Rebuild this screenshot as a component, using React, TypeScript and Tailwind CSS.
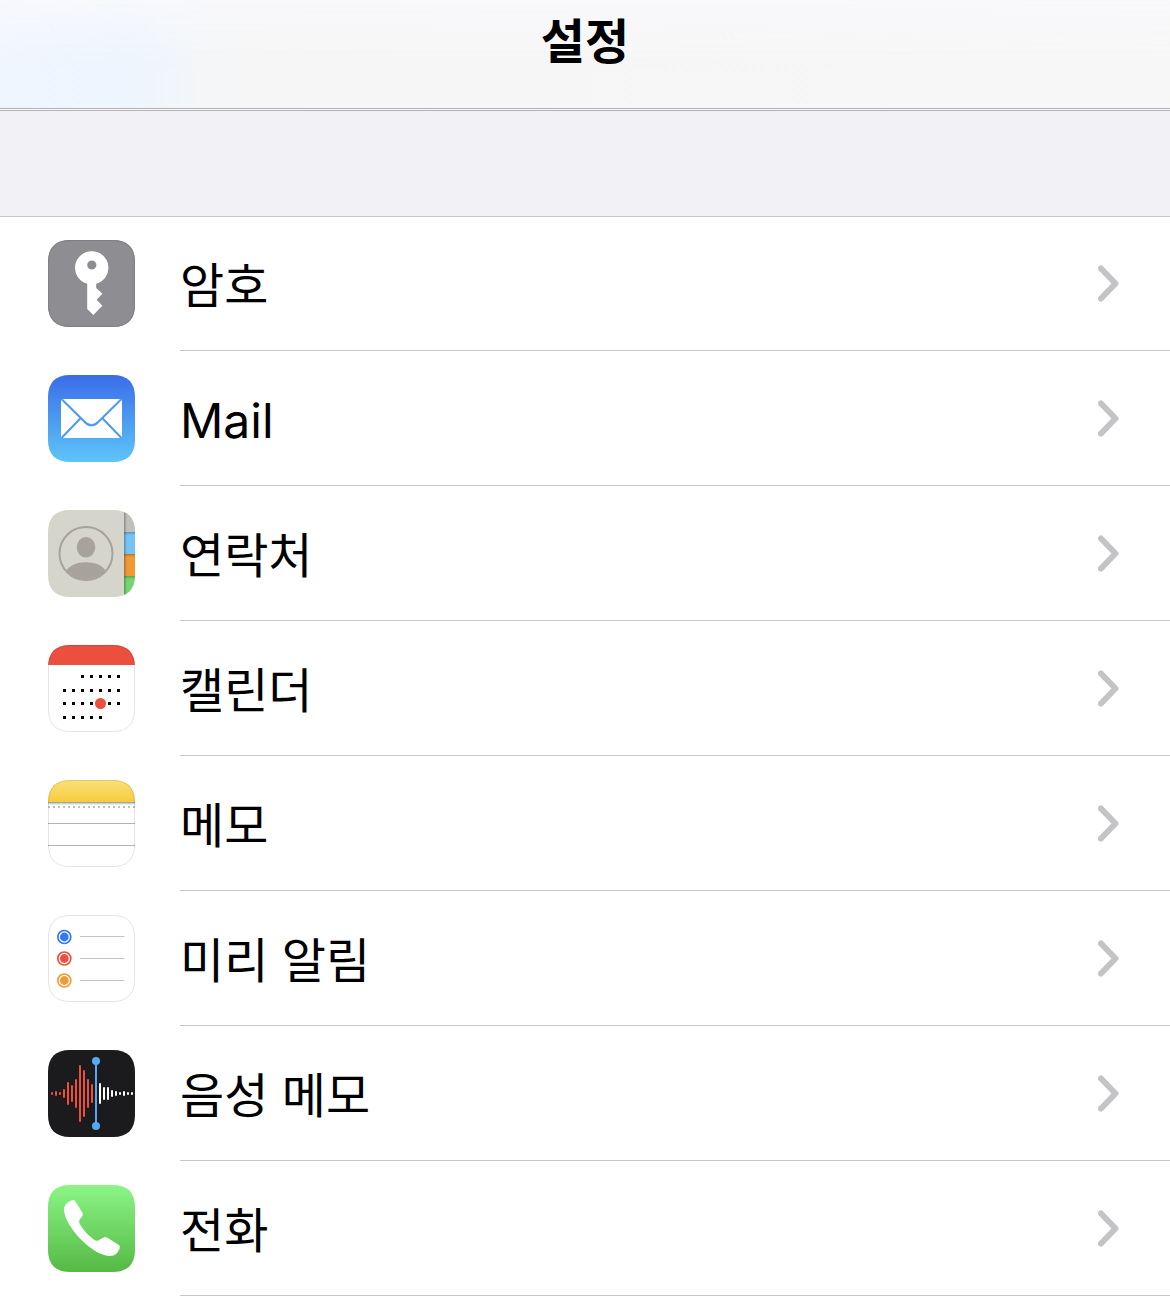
import React from "react";

const FRAME = "M22 .5H65C79 .5 86.500 8 86.500 22V65C86.500 79 79 86.500 65 86.500H22C8 86.500 .5 79 .5 65V22C.5 8 8 .5 22 .5Z";
const SHAPE = "M22 0H65C79.500 0 87 7.500 87 22V65C87 79.500 79.500 87 65 87H22C7.500 87 0 79.500 0 65V22C0 7.500 7.500 0 22 0Z";

function Tile({ id, outline, children }: { id: string; outline?: string; children: React.ReactNode }) {
  return (
    <svg viewBox="0 0 87 87" className="size-[87px] shrink-0" aria-hidden="true">
      <defs>
        <clipPath id={id + "-clip"}>
          <path d={SHAPE} />
        </clipPath>
      </defs>
      <g clipPath={"url(#" + id + "-clip)"}>{children}</g>
      {outline && <path d={FRAME} fill="none" stroke={outline} />}
    </svg>
  );
}

function KeyIcon() {
  return (
    <Tile id="key" outline="#7f7f84">
      <rect width="87" height="87" fill="#8e8d92" />
      <path
        fill="#fff"
        fillRule="evenodd"
        d="M43.900 11.200a16.600 16.600 0 0 1 4.300 32.600V48l6.200 5.700-5.800 6.100 5.800 6L45.300 75 39.200 69V43.800a16.600 16.600 0 0 1 4.700-32.600ZM43.800 20.400a4.600 4.600 0 1 0 0 9.200 4.600 4.600 0 0 0 0-9.200Z"
      />
    </Tile>
  );
}

function MailIcon() {
  return (
    <Tile id="mail">
      <defs>
        <linearGradient id="mail-sky" x1="0" y1="0" x2="0" y2="1">
          <stop offset="0" stopColor="#3a6de8" />
          <stop offset="1" stopColor="#5ec5f8" />
        </linearGradient>
      </defs>
      <rect width="87" height="87" fill="url(#mail-sky)" />
      <rect x="13" y="24" width="61" height="39" rx="1" fill="#fff" />
      <g fill="none" stroke="#4a9bef" strokeWidth="2">
        <path d="M13.500 24 36.500 46.700C41 51.500 46 51.500 50.500 46.700L73.500 24" />
        <path d="M13.500 63 32.300 43.500M73.500 63 54.700 43.500" />
      </g>
    </Tile>
  );
}

function ContactsIcon() {
  return (
    <Tile id="contacts">
      <defs>
        <clipPath id="contacts-face">
          <circle cx="38" cy="43.500" r="26" />
        </clipPath>
        <linearGradient id="contacts-edge" x1="0" y1="0" x2="1" y2="0">
          <stop offset="0" stopColor="#000" stopOpacity=".28" />
          <stop offset="1" stopColor="#000" stopOpacity="0" />
        </linearGradient>
        <linearGradient id="contacts-fold" x1="0" y1="0" x2="0" y2="1">
          <stop offset="0" stopColor="#000" stopOpacity=".25" />
          <stop offset="1" stopColor="#000" stopOpacity="0" />
        </linearGradient>
      </defs>
      <rect width="87" height="87" fill="#d5d5cb" />
      <rect x="76" width="11" height="22" fill="#c2c1b9" />
      <rect x="76" y="22" width="11" height="22" fill="#78c3f5" />
      <rect x="76" y="44" width="11" height="22" fill="#f09a37" />
      <rect x="76" y="66" width="11" height="21" fill="#75d571" />
      <rect x="76" y="22" width="11" height="3" fill="url(#contacts-fold)" />
      <rect x="76" y="44" width="11" height="3" fill="url(#contacts-fold)" />
      <rect x="76" y="66" width="11" height="3" fill="url(#contacts-fold)" />
      <rect x="76" width="3" height="87" fill="url(#contacts-edge)" />
      <circle cx="38" cy="43.500" r="26.500" fill="none" stroke="#a7a29b" strokeWidth="2" />
      <g clipPath="url(#contacts-face)" fill="#a7a29b">
        <ellipse cx="38" cy="37.300" rx="9.300" ry="10.300" />
        <path d="M18 61.500C21 55.500 29 52.300 38 52.300S55 55.500 58 61.500V72H18Z" />
      </g>
    </Tile>
  );
}

const CALENDAR_ROWS = [
  { y: 30, from: 2, to: 6 },
  { y: 44, from: 0, to: 6 },
  { y: 57, from: 0, to: 6 },
  { y: 71, from: 0, to: 4 },
];

function CalendarIcon() {
  return (
    <Tile id="calendar" outline="rgba(0,0,0,0.1)">
      <rect width="87" height="87" fill="#fff" />
      <rect width="87" height="20" fill="#eb4f3d" />
      {CALENDAR_ROWS.map(({ y, from, to }) =>
        Array.from({ length: to - from + 1 }, (_, i) => (
          <rect key={y + "-" + i} x={15 + 9 * (from + i)} y={y} width="3" height="3" fill="#000" />
        )),
      )}
      <circle cx="52.500" cy="58.500" r="5.500" fill="#eb4f3d" />
    </Tile>
  );
}

function NotesIcon() {
  return (
    <Tile id="notes" outline="rgba(0,0,0,0.1)">
      <defs>
        <linearGradient id="notes-top" x1="0" y1="0" x2="0" y2="1">
          <stop offset="0" stopColor="#fae07a" />
          <stop offset="1" stopColor="#f6cc3c" />
        </linearGradient>
      </defs>
      <rect width="87" height="87" fill="#fff" />
      <rect width="87" height="22" fill="url(#notes-top)" />
      <rect y="22" width="87" height="1" fill="#a3a3a5" />
      <rect y="23" width="87" height="1" fill="#cfcfd2" />
      <rect y="24" width="87" height="1" fill="#ececee" />
      <path d="M0 27H87" stroke="#bfbfc1" strokeWidth="2" strokeDasharray="2 3" />
      <path d="M0 43.500H87M0 65.500H87" stroke="#b4b4b6" />
    </Tile>
  );
}

function RemindersIcon() {
  const items = [
    { y: 22, line: 21.5, color: "#3478f6" },
    { y: 43.5, line: 43.5, color: "#eb4f3d" },
    { y: 65.5, line: 65.5, color: "#f19a37" },
  ];
  return (
    <Tile id="reminders" outline="#e5e5e5">
      <rect width="87" height="87" fill="#fff" />
      {items.map(({ y, line, color }) => (
        <g key={color}>
          <circle cx="16.300" cy={y} r="6.500" fill="none" stroke={color} strokeWidth="1.700" />
          <circle cx="16.300" cy={y} r="4.400" fill={color} />
          <path d={"M32 " + line + "H76.500"} stroke="#c3c3c5" />
        </g>
      ))}
    </Tile>
  );
}

const WAVE = [3, 5, 3, 9, 23, 17, 29, 57, 47, 29, 19, 0, 21, 13, 13, 7, 5, 3, 5, 3, 3];

function VoiceIcon() {
  return (
    <Tile id="voice">
      <rect width="87" height="87" fill="#1b1b1d" />
      {WAVE.map((h, i) => (
        <rect key={i} x={3 + 4 * i} y={43.5 - h / 2} width="2" height={h} rx="1" fill={i < 11 ? "#eb4f3d" : "#fff"} />
      ))}
      <g fill="#55a9f2">
        <rect x="47" y="11" width="2" height="65" />
        <circle cx="48" cy="11" r="4" />
        <circle cx="48" cy="76" r="4" />
      </g>
    </Tile>
  );
}

function PhoneIcon() {
  return (
    <Tile id="phone">
      <defs>
        <linearGradient id="phone-green" x1="0" y1="0" x2="0" y2="1">
          <stop offset="0" stopColor="#8bf586" />
          <stop offset="1" stopColor="#55b944" />
        </linearGradient>
      </defs>
      <rect width="87" height="87" fill="url(#phone-green)" />
      <path
        fill="#fff"
        d="M27 15.700 34.300 27.500Q35.500 29.300 34.300 31L31.700 34.600Q30.500 36.500 31.600 38.500C35 45 41.500 51.500 46.500 55Q48.500 56.300 50.500 55.200L55.500 52.400Q57.300 51.400 59 52.500L70.500 59.700Q72.500 61 71.700 63C70 68 67 71 62 71C54 71 43 64.500 34 55.500C24 45.500 16 33 16 24.500C16 20 19.500 16.800 24 15.200Q26 14.400 27 15.700Z"
      />
    </Tile>
  );
}

function Chevron() {
  return (
    <svg viewBox="0 0 24 40" className="h-10 w-6 shrink-0" fill="none" aria-hidden="true">
      <path d="M3 5.500 17.500 20.500 3 35.500" stroke="#c4c4c6" strokeWidth="6" strokeLinecap="round" strokeLinejoin="round" />
    </svg>
  );
}

const ITEMS = [
  { label: "암호", Icon: KeyIcon },
  { label: "Mail", Icon: MailIcon },
  { label: "연락처", Icon: ContactsIcon },
  { label: "캘린더", Icon: CalendarIcon },
  { label: "메모", Icon: NotesIcon },
  { label: "미리 알림", Icon: RemindersIcon },
  { label: "음성 메모", Icon: VoiceIcon },
  { label: "전화", Icon: PhoneIcon },
];

export default function App() {
  return (
    <div lang="ko" className="bg-white font-['Inter','Noto_Sans_CJK_KR',sans-serif] text-black">
      <header className="flex h-[111px] items-start justify-center border-b-3 border-double border-[#b2b2b4] bg-[linear-gradient(180deg,rgba(249,249,252,0.8)_0%,rgba(247,247,247,0)_60%),linear-gradient(90deg,#f0f6ff_0%,#edf5fe_11%,#f4f6f8_17%,#f6f6f6_22%,#f7f7f7_100%)] pt-1.5">
        <h1 className="text-[48px] leading-[72px] font-semibold">설정</h1>
      </header>
      <div className="h-[106px] border-b border-[#c6c6c8] bg-[#f1f1f6]" />
      <nav className="-mt-px">
        <ul>
          {ITEMS.map(({ label, Icon }) => (
            <li key={label}>
              <a href="#" className="flex items-center gap-[45px] pl-12">
                <Icon />
                <span className="flex h-[135px] flex-1 items-center justify-between border-b border-[#c6c6c8] pr-12">
                  <span className="pt-1.5 text-[48px] leading-[72px]">{label}</span>
                  <Chevron />
                </span>
              </a>
            </li>
          ))}
        </ul>
      </nav>
    </div>
  );
}
